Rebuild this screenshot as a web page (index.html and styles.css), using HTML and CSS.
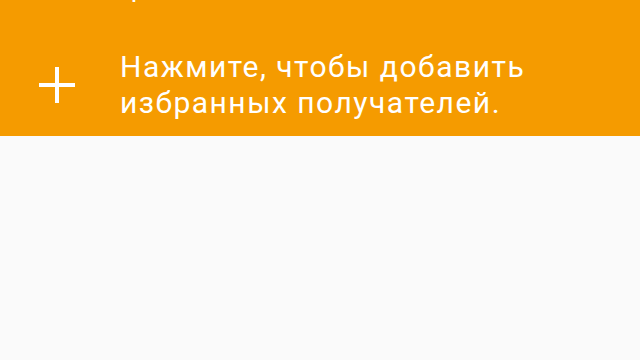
FILE: index.html
```html
<!DOCTYPE html>
<html lang="ru">
<head>
<meta charset="utf-8">
<link rel="stylesheet" href="styles.css">
</head>
<body>
<div class="band">
  <div class="prev">Грант</div>
  <div class="row">
    <svg class="plus" width="36" height="36" viewBox="0 0 36 36"><path d="M18 0V36M0 18H36" stroke="#fff" stroke-width="4" fill="none"/></svg>
    <div class="text">Нажмите, чтобы добавить<br>избранных получателей.</div>
  </div>
</div>
<div class="rest"></div>
</body>
</html>
```
FILE: styles.css
```css
html, body {
  margin: 0;
  padding: 0;
  background: #fafafa;
  font-family: Roboto, "Noto Sans", sans-serif;
}
.band {
  background: #f59b00;
  height: 136px;
  overflow: hidden;
  color: #fff;
}
.prev {
  margin-top: -31px;
  height: 36px;
  line-height: 36px;
  font-size: 28px;
  padding-left: 118px;
}
.row {
  margin-top: 44px;
  display: flex;
  align-items: center;
  padding-left: 39px;
}
.plus {
  flex: none;
}
.text {
  margin-left: 45px;
  font-size: 30px;
  line-height: 36px;
  letter-spacing: 1.5px;
}
```
